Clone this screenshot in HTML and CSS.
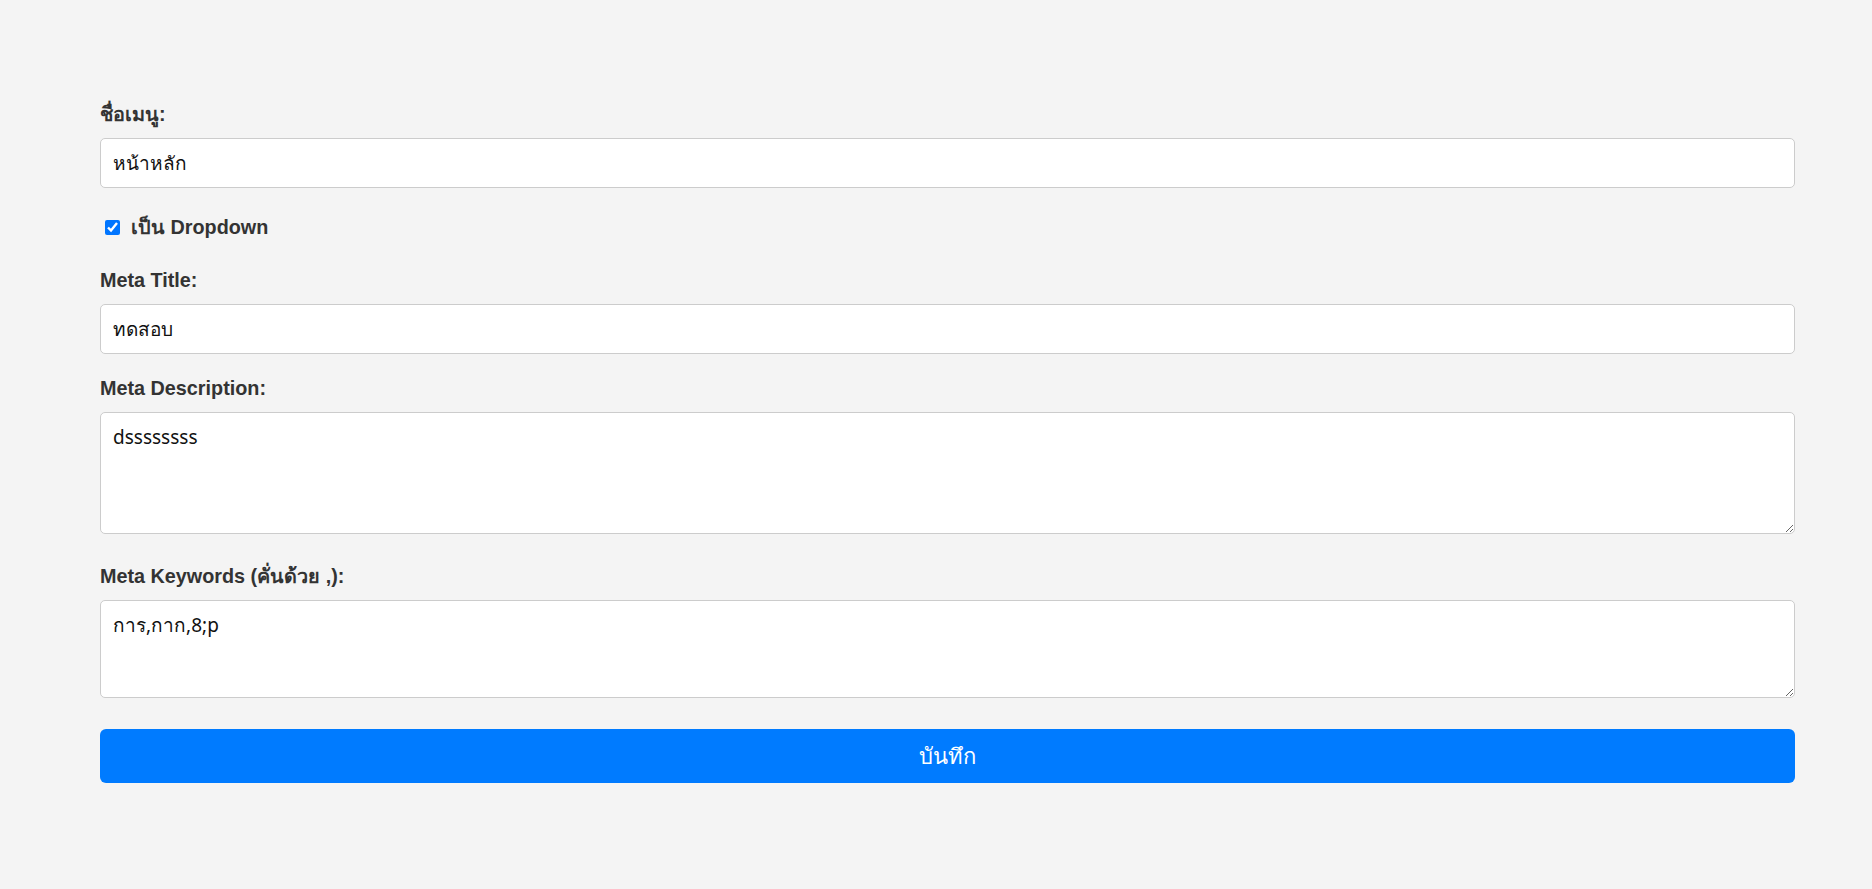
FILE: index.html
```html
<!DOCTYPE html>
<html lang="th">
<head>
<meta charset="utf-8">
<title>แก้ไขเมนู</title>
<link rel="stylesheet" href="styles.css">
</head>
<body>
<form class="menu-form">
  <div class="group group-first">
    <label class="label" for="name">ชื่อเมนู:</label>
    <input class="field" id="name" type="text" value="หน้าหลัก">
  </div>
  <div class="check-row">
    <input class="check" id="dd" type="checkbox" checked>
    <label class="label check-label" for="dd">เป็น Dropdown</label>
  </div>
  <div class="group">
    <label class="label" for="mt">Meta Title:</label>
    <input class="field" id="mt" type="text" value="ทดสอบ">
  </div>
  <div class="group group-area">
    <label class="label" for="md">Meta Description:</label>
    <textarea class="field area area-desc" id="md">dssssssss</textarea>
  </div>
  <div class="group group-area">
    <label class="label" for="mk">Meta Keywords (คั่นด้วย ,):</label>
    <textarea class="field area area-kw" id="mk">การ,กาก,8;p</textarea>
  </div>
  <button class="save" type="button">บันทึก</button>
</form>
</body>
</html>
```

FILE: styles.css
```css
html, body {
  margin: 0;
  padding: 0;
  background: #f4f4f4;
}
body {
  font-family: "Liberation Sans", Arial, sans-serif;
  color: #333;
}
.menu-form {
  width: 1695px;
  margin-left: 100px;
  padding-top: 103px;
  display: flex;
  flex-direction: column;
}
.group {
  display: flex;
  flex-direction: column;
  margin-bottom: 23px;
}
.group-first {
  margin-bottom: 28px;
}
.group-area {
  margin-bottom: 31px;
}
.label {
  font-family: "Liberation Sans", Arial, sans-serif;
  font-weight: bold;
  font-size: 19.8px;
  line-height: 22px;
  color: #333;
  margin-bottom: 13px;
}
.field {
  box-sizing: border-box;
  width: 100%;
  height: 50px;
  margin: 0;
  padding: 11px 12px;
  border: 1px solid #cccccc;
  border-radius: 5px;
  background: #fff;
  font-family: "Noto Sans", "Open Sans", sans-serif;
  font-size: 19px;
  line-height: 26px;
  color: #111;
  outline: none;
}
.area {
  display: block;
  resize: vertical;
  padding-top: 11px;
}
.area-desc {
  height: 122px;
}
.area-kw {
  height: 98px;
}
.check-row {
  display: flex;
  align-items: center;
  height: 22px;
  margin-bottom: 31px;
}
.check {
  width: 15px;
  height: 15px;
  margin: 0 11px 0 5px;
  accent-color: #0075ff;
}
.check-label {
  margin-bottom: 0;
}
.save {
  box-sizing: border-box;
  width: 100%;
  height: 54px;
  border: none;
  border-radius: 6px;
  background: #007bff;
  color: #fff;
  font-family: "Noto Sans", "Open Sans", sans-serif;
  font-size: 22px;
  cursor: pointer;
}
```
